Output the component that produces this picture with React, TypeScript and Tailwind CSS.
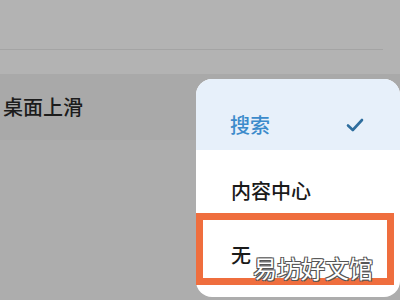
import React from 'react';

const font = { fontFamily: '"Noto Sans CJK SC", "Noto Sans", sans-serif' };

export default function App() {
  return (
    <div className="relative w-[400px] h-[300px] overflow-hidden bg-[#b3b3b3]" style={font}>
      {/* Background settings list */}
      <div className="h-[49px]" />
      <div className="h-px w-[383px] bg-[#a4a4a4]" />
      <div className="h-[24px]" />
      <div className="flex h-[66px] items-center bg-[#a9a9a9] pl-[3px] pb-[1px]">
        <span className="text-[20px] leading-[20px] font-medium text-[#1c1c1c]">桌面上滑</span>
      </div>
      <div className="h-[160px] bg-[#adadad]" />

      {/* Dropdown popup */}
      <div className="absolute left-[196px] top-[79px] flex h-[218px] w-[204px] flex-col overflow-hidden rounded-[16px] bg-white">
        <div className="flex h-[71px] items-start justify-between bg-[#e7f0fa] pl-[34px] pr-[36px] pt-[36px]">
          <span className="text-[20px] leading-[20px] font-medium text-[#3c8bcb]">搜索</span>
          <svg width="18" height="14" viewBox="0 0 18 14" className="mt-[3px]">
            <path d="M2 7.5 L6.8 12 L16 2" fill="none" stroke="#2f6e9e" strokeWidth="2.6" strokeLinecap="round" strokeLinejoin="round" />
          </svg>
        </div>
        <div className="flex flex-col pl-[35px] pt-[31px]">
          <span className="text-[20px] leading-[20px] font-medium text-[#1a1a1a]">内容中心</span>
          <span className="mt-[44px] text-[20px] leading-[20px] font-medium text-[#1a1a1a]">无</span>
        </div>
      </div>

      {/* Highlight annotation */}
      <div className="absolute left-[196px] top-[213px] h-[72px] w-[198px] border-[7px] border-[#ef6e3e]" />

      {/* Watermark */}
      <div className="absolute left-[253px] top-[254px] text-[24px] leading-[28px] text-white [text-shadow:-1px_-1px_0_#555,1px_-1px_0_#555,-1px_1px_0_#555,1px_1px_0_#555]">
        易坊好文馆
      </div>
    </div>
  );
}
